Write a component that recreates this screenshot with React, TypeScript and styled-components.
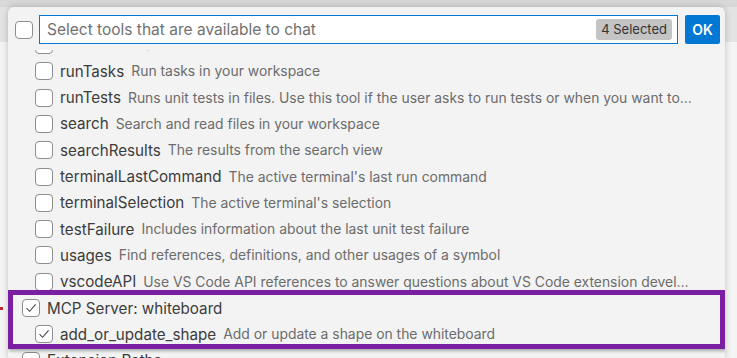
import React from "react";
import styled, { createGlobalStyle } from "styled-components";

type Tool = { name: string; desc: string };

const tools: Tool[] = [
  { name: "runInTerminal", desc: "Run commands in the terminal" },
  { name: "runTasks", desc: "Run tasks in your workspace" },
  {
    name: "runTests",
    desc: "Runs unit tests in files. Use this tool if the user asks to run tests or when you want to validate changes using unit tests.",
  },
  { name: "search", desc: "Search and read files in your workspace" },
  { name: "searchResults", desc: "The results from the search view" },
  { name: "terminalLastCommand", desc: "The active terminal's last run command" },
  { name: "terminalSelection", desc: "The active terminal's selection" },
  { name: "testFailure", desc: "Includes information about the last unit test failure" },
  { name: "usages", desc: "Find references, definitions, and other usages of a symbol" },
  {
    name: "vscodeAPI",
    desc: "Use VS Code API references to answer questions about VS Code extension development.",
  },
];

const font = `Inter, "Liberation Sans", Arial, sans-serif`;

const GlobalStyle = createGlobalStyle`
  html, body {
    margin: 0;
    padding: 0;
  }
  body {
    font-family: ${font};
    background: linear-gradient(
      to bottom,
      #d8d8d8 0,
      #d8d8d8 7px,
      #e3e3e3 7px,
      #e3e3e3 42px,
      #f4f4f4 42px
    );
  }
`;

const Check = ({ checked }: { checked?: boolean }) => (
  <CheckBox>
    {checked && (
      <svg width="14" height="14" viewBox="0 0 14 14">
        <path d="M2.5 7.2 L5.6 10.3 L11.6 3.4" fill="none" stroke="#4a4a4a" strokeWidth="1.1" />
      </svg>
    )}
  </CheckBox>
);

const App = () => {
  return (
    <Page>
      <GlobalStyle />
      <RedMark />
      <Dialog>
        <Header>
          <Check />
          <SearchBox>
            <Placeholder>Select tools that are available to chat</Placeholder>
            <Badge>4 Selected</Badge>
          </SearchBox>
          <OkButton>OK</OkButton>
        </Header>
        <List>
          {tools.map((t) => (
            <Row key={t.name} $indent={27}>
              <Check />
              <Label>{t.name}</Label>
              <Desc>{t.desc}</Desc>
            </Row>
          ))}
          <Highlight>
            <Row $indent={14}>
              <Check checked />
              <Label>MCP Server: whiteboard</Label>
            </Row>
            <Row $indent={27}>
              <Check checked />
              <Label>add_or_update_shape</Label>
              <Desc>Add or update a shape on the whiteboard</Desc>
            </Row>
          </Highlight>
          <Row $indent={14}>
            <Check />
            <Label>Extension Paths</Label>
          </Row>
        </List>
      </Dialog>
    </Page>
  );
};

export default App;

const Page = styled.div`
  position: relative;
  width: 737px;
  height: 358px;
  box-sizing: border-box;
  padding: 7px 12px 0 8px;
  overflow: hidden;
  display: flex;
`;

const RedMark = styled.div`
  position: absolute;
  left: 0;
  top: 307px;
  width: 3px;
  height: 3px;
  background: #c0262d;
`;

const Dialog = styled.div`
  flex: 1;
  display: flex;
  flex-direction: column;
  background: #f3f3f3;
  border-radius: 6px 6px 0 0;
  box-shadow: 0 0 6px rgba(0, 0, 0, 0.22);
  min-width: 0;
`;

const Header = styled.div`
  display: flex;
  align-items: center;
  padding: 8px 5px 6px 7px;
  gap: 6px;
`;

const CheckBox = styled.span`
  flex: none;
  width: 18px;
  height: 18px;
  box-sizing: border-box;
  border: 1px solid #8e8e8e;
  border-radius: 4px;
  background: #ffffff;
  display: flex;
  align-items: center;
  justify-content: center;
`;

const SearchBox = styled.div`
  flex: 1;
  height: 29px;
  box-sizing: border-box;
  border: 1px solid #0078d4;
  background: #ffffff;
  display: flex;
  align-items: center;
  padding: 0 5px 0 7px;
`;

const Placeholder = styled.span`
  flex: 1;
  font-size: 15.5px;
  color: #717171;
`;

const Badge = styled.span`
  background: #c4c4c4;
  color: #333333;
  font-size: 13px;
  border-radius: 3px;
  padding: 2px 5px;
  line-height: 17px;
`;

const OkButton = styled.button`
  margin-left: 1px;
  width: 35px;
  height: 29px;
  border: none;
  border-radius: 2px;
  background: #0078d4;
  color: #ffffff;
  font-family: ${font};
  font-size: 14px;
  font-weight: 600;
  padding: 0;
`;

const List = styled.div`
  flex: 1;
  overflow: hidden;
  & > :first-child {
    margin-top: -18.3px;
  }
`;

const Row = styled.div<{ $indent: number }>`
  height: 26.33px;
  display: flex;
  align-items: center;
  padding: 0 31px 0 ${(p) => p.$indent}px;
  white-space: nowrap;
  overflow: hidden;
  min-width: 0;
`;

const Label = styled.span`
  flex: none;
  margin-left: 7px;
  font-size: 15.2px;
  color: #3c3c3c;
`;

const Desc = styled.span`
  margin-left: 7px;
  font-size: 13.9px;
  color: #6c6c6c;
  overflow: hidden;
  text-overflow: ellipsis;
  min-width: 0;
`;

const Highlight = styled.div`
  position: relative;
  &::after {
    content: "";
    position: absolute;
    top: -5px;
    bottom: -1px;
    left: 0;
    right: 0;
    border: 5px solid #7b1fa2;
    box-shadow: 1px 2px 3px rgba(0, 0, 0, 0.3);
    pointer-events: none;
  }
`;
